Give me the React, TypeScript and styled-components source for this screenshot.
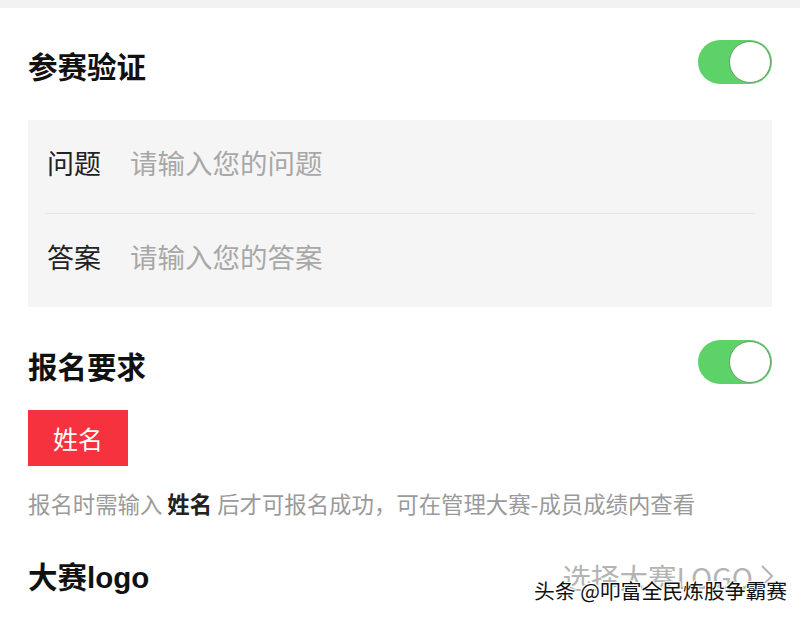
import React from "react";
import styled, { createGlobalStyle } from "styled-components";

const GlobalStyle = createGlobalStyle`
  html, body {
    margin: 0;
    padding: 0;
    background: #ffffff;
  }
  body {
    font-family: "Liberation Sans", "Noto Sans CJK SC", sans-serif;
    color: #111;
  }
`;

const Page = styled.div`
  position: relative;
  width: 800px;
  height: 618px;
  overflow: hidden;
  background: #fff;
`;

const TopStrip = styled.div`
  height: 8px;
  background: #f2f2f2;
`;

const Content = styled.div`
  padding: 0 28px;
  display: flex;
  flex-direction: column;
`;

const HeaderRow = styled.div<{ $top: number }>`
  margin-top: ${(p) => p.$top}px;
  height: 44px;
  display: flex;
  align-items: center;
  justify-content: space-between;
`;

const Title = styled.h2<{ $shift?: number }>`
  margin: 0;
  position: relative;
  top: ${(p) => p.$shift ?? 0}px;
  font-size: 29.5px;
  font-weight: 700;
  color: #111;
`;

const Track = styled.div<{ $on: boolean }>`
  width: 74px;
  height: 44px;
  border-radius: 22px;
  background: ${(p) => (p.$on ? "#5dd268" : "#e5e5e5")};
  display: flex;
  align-items: center;
  justify-content: ${(p) => (p.$on ? "flex-end" : "flex-start")};
  padding: 1px;
  box-sizing: border-box;
`;

const Knob = styled.div`
  width: 42px;
  height: 42px;
  border-radius: 50%;
  background: #fff;
  box-sizing: border-box;
  border: 1.5px solid #6b9a6d;
`;

const Panel = styled.div`
  margin-top: 36px;
  background: #f5f5f5;
  display: flex;
  flex-direction: column;
`;

const FieldRow = styled.label`
  height: 93px;
  box-sizing: border-box;
  padding-bottom: 9px;
  display: flex;
  align-items: center;
  padding-left: 19px;
  gap: 29px;
`;

const Divider = styled.div`
  height: 1px;
  margin: 0 17px;
  background: #e6e6e6;
`;

const FieldLabel = styled.span`
  font-size: 27px;
  color: #222;
  font-family: "Noto Sans CJK SC", sans-serif;
`;

const FieldInput = styled.input`
  flex: 1;
  border: none;
  outline: none;
  background: transparent;
  font-size: 27.5px;
  font-family: "Noto Sans CJK SC", sans-serif;
  color: #222;
  padding: 0;
  &::placeholder {
    color: #a8a8a8;
  }
`;

const Tag = styled.div`
  margin-top: 26px;
  width: 100px;
  height: 56px;
  background: #f6323e;
  color: #fff;
  font-size: 25px;
  font-family: "Noto Sans CJK SC", sans-serif;
  display: flex;
  align-items: center;
  justify-content: center;
`;

const Hint = styled.p`
  margin: 22px 0 0;
  line-height: 30px;
  font-size: 22.4px;
  color: #9a9a9a;
  font-family: "Noto Sans CJK SC", sans-serif;
  white-space: nowrap;
  b {
    color: #222;
    font-weight: 700;
  }
`;

const LinkText = styled.span`
  font-size: 28.5px;
  color: #b4b4b4;
  font-family: "Noto Sans CJK SC", sans-serif;
  display: flex;
  align-items: center;
  gap: 6px;
  margin-top: -4px;
  margin-right: -3px;
`;

const Watermark = styled.div`
  position: absolute;
  left: 534px;
  top: 575px;
  font-size: 20.8px;
  line-height: 30px;
  color: #111;
  font-family: "Noto Sans CJK SC", sans-serif;
  white-space: nowrap;
  text-shadow: 1px 1px 0 #fff, -1px -1px 0 #fff, 1px -1px 0 #fff, -1px 1px 0 #fff;
`;

const Toggle = ({ on }: { on: boolean }) => (
  <Track $on={on}>
    <Knob />
  </Track>
);

export default function App() {
  return (
    <Page>
      <GlobalStyle />
      <TopStrip />
      <Content>
        <HeaderRow $top={32}>
          <Title $shift={3}>参赛验证</Title>
          <Toggle on />
        </HeaderRow>
        <Panel>
          <FieldRow>
            <FieldLabel>问题</FieldLabel>
            <FieldInput placeholder="请输入您的问题" />
          </FieldRow>
          <Divider />
          <FieldRow>
            <FieldLabel>答案</FieldLabel>
            <FieldInput placeholder="请输入您的答案" />
          </FieldRow>
        </Panel>
        <HeaderRow $top={33}>
          <Title $shift={3}>报名要求</Title>
          <Toggle on />
        </HeaderRow>
        <Tag>姓名</Tag>
        <Hint>
          报名时需输入 <b>姓名</b> 后才可报名成功，可在管理大赛-成员成绩内查看
        </Hint>
        <HeaderRow $top={38}>
          <Title $shift={-3}>大赛logo</Title>
          <LinkText>
            选择大赛LOGO
            <svg width="16" height="26" viewBox="0 0 16 26" fill="none">
              <path d="M3 3 L13 13 L3 23" stroke="#b4b4b4" strokeWidth="2" />
            </svg>
          </LinkText>
        </HeaderRow>
      </Content>
      <Watermark>头条 @叩富全民炼股争霸赛</Watermark>
    </Page>
  );
}
